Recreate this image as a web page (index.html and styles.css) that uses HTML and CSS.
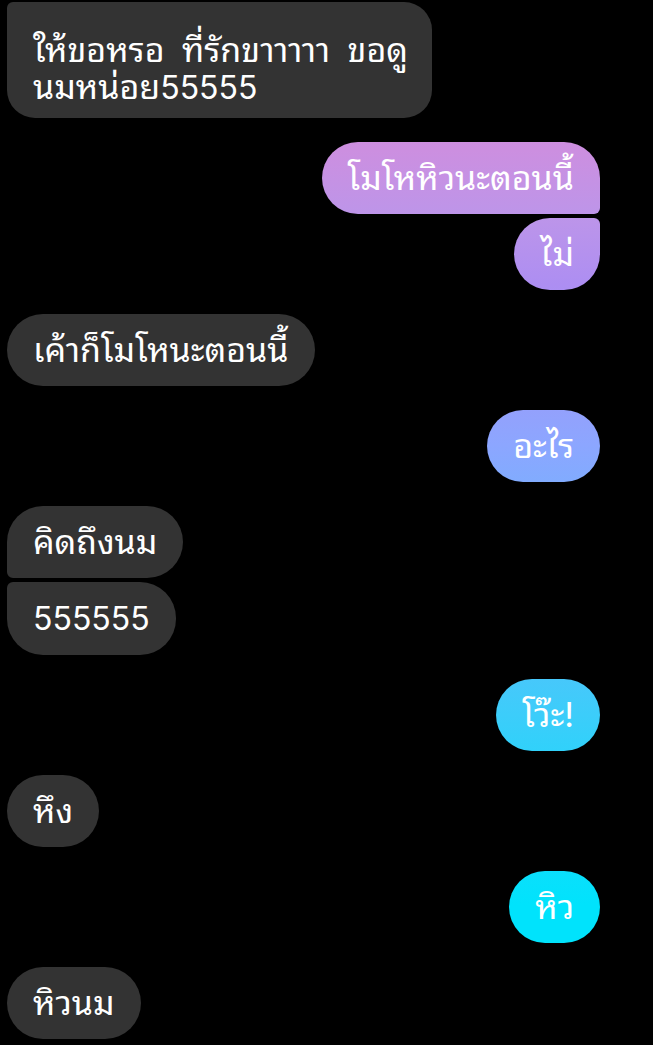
FILE: index.html
```html
<!DOCTYPE html>
<html lang="th">
<head>
  <meta charset="UTF-8">
  <title>แชท</title>
  <meta name="viewport" content="width=device-width, initial-scale=1">
  <link rel="stylesheet" href="styles.css">
</head>
<body>

  <div class="chat">
    <div class="msg in top-cont multi">ให้ขอหรอ ที่รักขาาาาา ขอดู<br>นมหน่อย<span class="num">55555</span></div>

    <div class="group out">
      <div class="msg out first">โมโหหิวนะตอนนี้</div>
      <div class="msg out last">ไม่</div>
    </div>

    <div class="msg in">เค้าก็โมโหนะตอนนี้</div>

    <div class="msg out">อะไร</div>

    <div class="group in">
      <div class="msg in first">คิดถึงนม</div>
      <div class="msg in last"><span class="num">555555</span></div>
    </div>

    <div class="msg out">โว๊ะ!</div>

    <div class="msg in">หึง</div>

    <div class="msg out">หิว</div>

    <div class="msg in">หิวนม</div>
  </div>

</body>
</html>
```

FILE: styles.css
```css
* { box-sizing: border-box; }

html, body {
  background: #000;
}

body {
  margin: 0;
  font-family: Inter, "Noto Sans Thai Looped", "Noto Sans Thai", Loma, Garuda, sans-serif;
  color: #fff;
}

.chat {
  display: flex;
  flex-direction: column;
  gap: 24px;
  padding: 2px 53px 0 7px;
}

.group {
  display: flex;
  flex-direction: column;
  gap: 4px;
}

.group.in { align-items: flex-start; }
.group.out { align-items: flex-end; }

.msg {
  font-size: 34px;
  line-height: 37px;
  padding: 17px 26px 18px;
  border-radius: 36px;
  white-space: nowrap;
}

.msg .num {
  font-size: 32px;
}

.msg.in {
  align-self: flex-start;
  background: #333;
}

.msg.out {
  align-self: flex-end;
  background: linear-gradient(to bottom,
    #d48ade 100px,
    #cc8fe0 150px,
    #bd95e9 215px,
    #ad8ef2 285px,
    #8ca6ff 445px,
    #3ccdfa 715px,
    #00e3fc 905px) fixed;
}

.msg.multi {
  padding: 29px 24px 12px 26px;
  border-radius: 28px;
  word-spacing: 8px;
}

.msg.in.top-cont { border-top-left-radius: 6px; }

.msg.in.first { border-bottom-left-radius: 6px; }
.msg.in.last { border-top-left-radius: 6px; }

.msg.out.first { border-bottom-right-radius: 6px; }
.msg.out.last { border-top-right-radius: 6px; }
```
